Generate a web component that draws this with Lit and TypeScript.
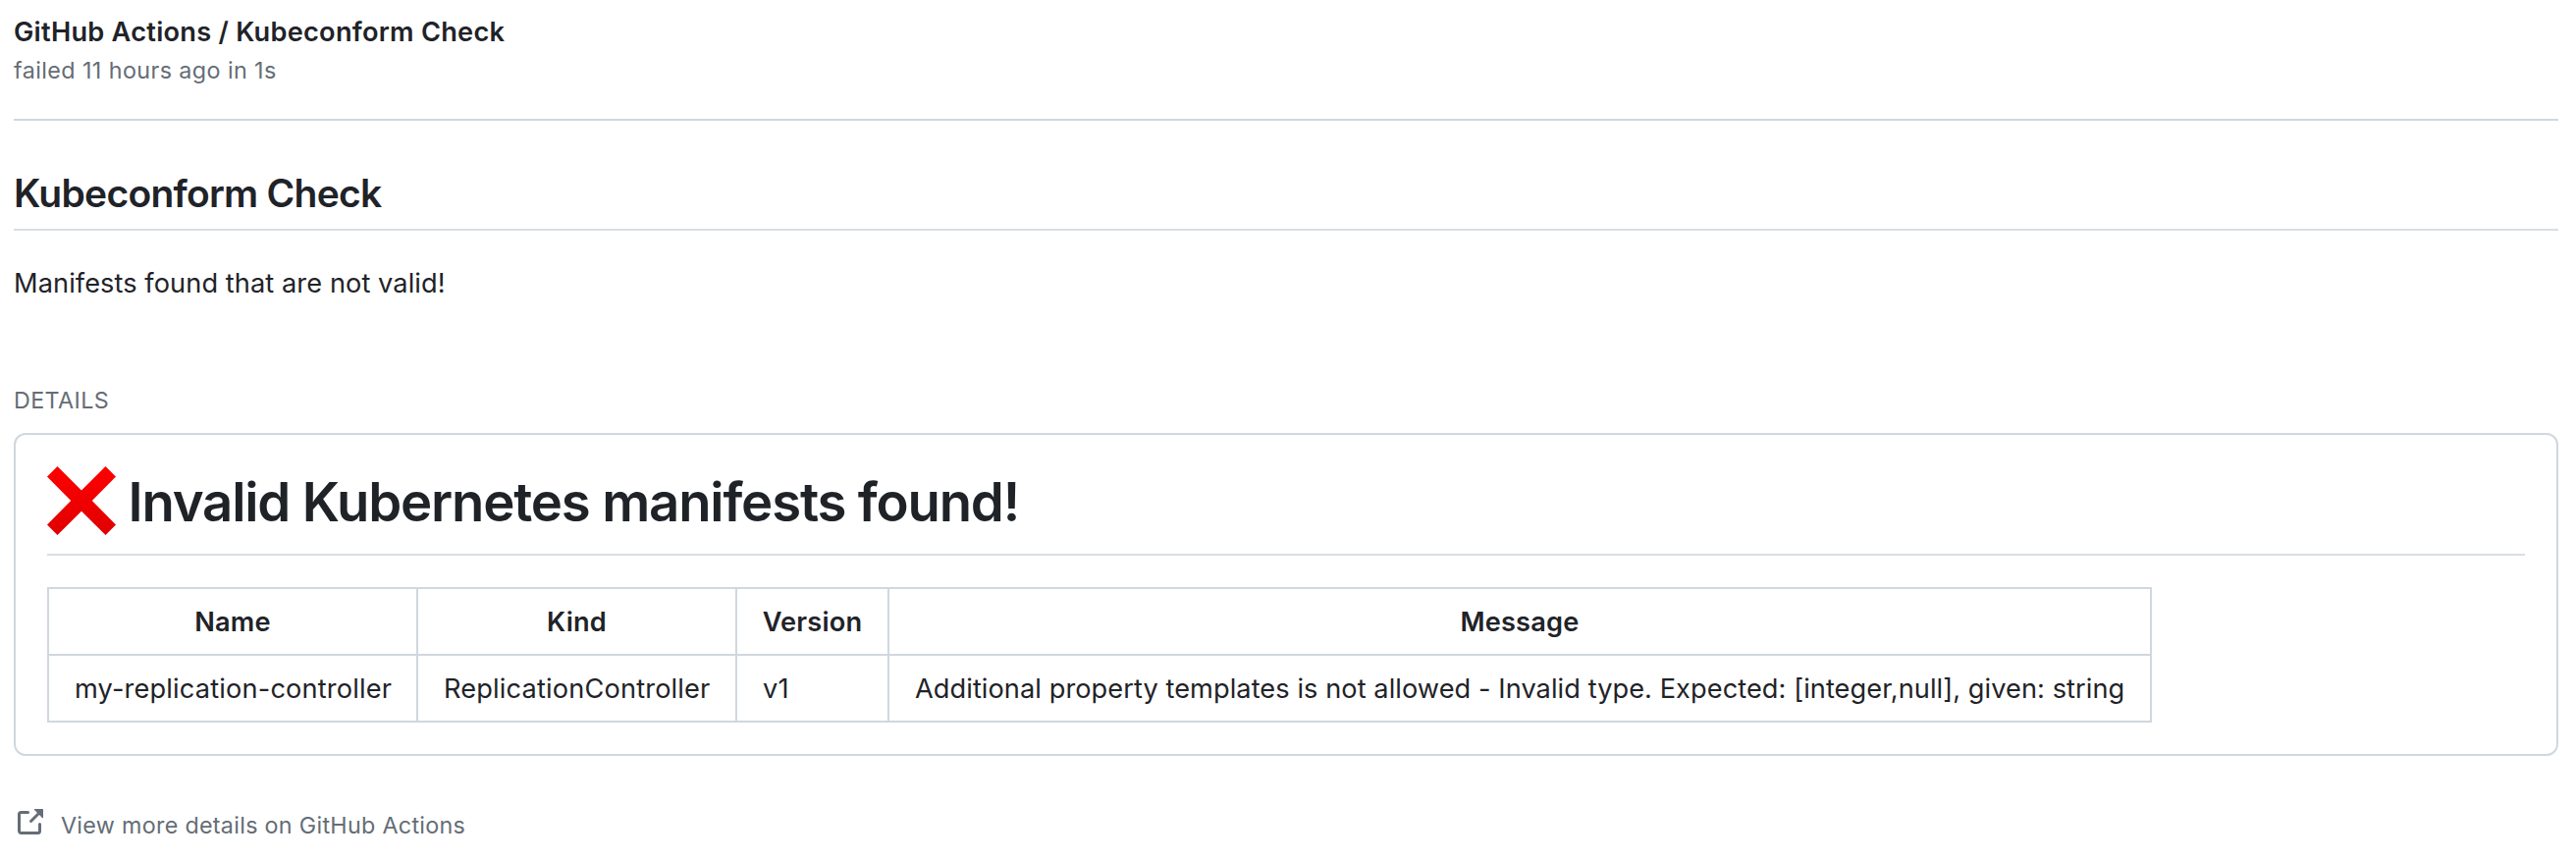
import { LitElement, html, css } from "lit";
import { customElement } from "lit/decorators.js";

interface Finding {
  name: string;
  kind: string;
  version: string;
  message: string;
}

const findings: Finding[] = [
  {
    name: "my-replication-controller",
    kind: "ReplicationController",
    version: "v1",
    message:
      "Additional property templates is not allowed - Invalid type. Expected: [integer,null], given: string",
  },
];

@customElement("findings-table")
class FindingsTable extends LitElement {
  static styles = css`
    :host {
      display: block;
    }
    .table {
      width: 2144px;
      table-layout: fixed;
      border-collapse: collapse;
      border-spacing: 0;
    }
    .col-name {
      width: 376px;
    }
    .col-kind {
      width: 325px;
    }
    .col-version {
      width: 155px;
    }
    .cell {
      box-sizing: border-box;
      padding: 13px 0 11px 26px;
      border: 2px solid #d0d7de;
      line-height: 42px;
      text-align: left;
      font-weight: 400;
      white-space: nowrap;
      letter-spacing: 0.16px;
    }
    .message {
      letter-spacing: 0.064px;
    }
    .head {
      padding: 13px 0 11px;
      text-align: center;
      font-weight: 600;
      letter-spacing: 0.2px;
    }
  `;

  render() {
    return html`
      <table class="table">
        <colgroup>
          <col class="col-name" />
          <col class="col-kind" />
          <col class="col-version" />
          <col />
        </colgroup>
        <thead>
          <tr>
            ${["Name", "Kind", "Version", "Message"].map(
              (label) => html`<th class="cell head">${label}</th>`
            )}
          </tr>
        </thead>
        <tbody>
          ${findings.map(
            (f) => html`<tr>
              <td class="cell">${f.name}</td>
              <td class="cell">${f.kind}</td>
              <td class="cell">${f.version}</td>
              <td class="cell message">${f.message}</td>
            </tr>`
          )}
        </tbody>
      </table>
    `;
  }
}

@customElement("app-root")
class AppRoot extends LitElement {
  static styles = css`
    :host {
      display: block;
      box-sizing: border-box;
      height: 876px;
      padding: 12px 18px 0 14px;
      background: #fff;
      color: #1f2328;
      font-family: Inter, "Liberation Sans", sans-serif;
      font-size: 27.2px;
      line-height: 42px;
      overflow: hidden;
    }
    .header {
      padding-bottom: 31px;
      border-bottom: 2px solid #d0d7de;
    }
    .title {
      margin: 0;
      font-size: 27.2px;
      font-weight: 600;
      letter-spacing: 0.249px;
    }
    .muted {
      color: #656d76;
      font-size: 23.3px;
      line-height: 36px;
    }
    .status {
      letter-spacing: 0.417px;
    }
    .summary-title {
      margin: 49px 0 0;
      padding-bottom: 11px;
      border-bottom: 2px solid #d8dee4;
      font-size: 39px;
      font-weight: 600;
      line-height: 50px;
      letter-spacing: -0.743px;
    }
    .summary {
      margin: 33px 0 0;
      letter-spacing: 0.08px;
    }
    .label {
      margin: 80px 0 15px;
      letter-spacing: 0.4px;
    }
    .details {
      padding: 32px;
      border: 2px solid #d0d7de;
      border-radius: 12px;
    }
    .details-title {
      display: flex;
      gap: 12.5px;
      margin: 0 0 32px;
      padding-bottom: 17px;
      border-bottom: 2px solid #d8dee4;
      font-size: 54.5px;
      font-weight: 600;
      line-height: 72px;
      letter-spacing: -1.18px;
    }
    .cross {
      flex: none;
      width: 70px;
      height: 70px;
    }
    .link {
      display: flex;
      gap: 16px;
      margin-top: 52px;
      letter-spacing: 0.3px;
      text-decoration: none;
    }
    .link-text {
      padding-top: 1px;
    }
    .link-icon {
      flex: none;
      width: 32px;
      height: 32px;
      fill: currentColor;
    }
  `;

  render() {
    return html`
      <header class="header">
        <h3 class="title">GitHub Actions / Kubeconform Check</h3>
        <div class="muted status">failed 11 hours ago in 1s</div>
      </header>
      <h2 class="summary-title">Kubeconform Check</h2>
      <p class="summary">Manifests found that are not valid!</p>
      <div class="muted label">DETAILS</div>
      <section class="details">
        <h1 class="details-title">
          <svg class="cross" viewBox="0 0 70 70" aria-hidden="true">
            <defs>
              <linearGradient id="red" x1="0" y1="0" x2="0" y2="1">
                <stop offset="0" stop-color="#ff0000" />
                <stop offset="1" stop-color="#e00000" />
              </linearGradient>
            </defs>
            <path
              fill="url(#red)"
              d="M10.5 0 35 24.5 59.5 0 70 10.5 45.8 35 70 59.5 59.5 70 35 45.7 10.5 70 0 59.5 24.2 35 0 10.5Z"
            />
          </svg>
          <span>Invalid Kubernetes manifests found!</span>
        </h1>
        <findings-table></findings-table>
      </section>
      <a class="muted link">
        <svg class="link-icon" viewBox="0 0 16 16" aria-hidden="true">
          <path
            d="M10.604 1h4.146a.25.25 0 01.25.25v4.146a.25.25 0 01-.427.177L13.03 4.03 9.28 7.78a.75.75 0 01-1.06-1.06l3.75-3.75-1.543-1.543A.25.25 0 0110.604 1zM3.75 2A1.75 1.75 0 002 3.75v8.5c0 .966.784 1.75 1.75 1.75h8.5A1.75 1.75 0 0014 12.25v-3.5a.75.75 0 00-1.5 0v3.5a.25.25 0 01-.25.25h-8.5a.25.25 0 01-.25-.25v-8.5a.25.25 0 01.25-.25h3.5a.75.75 0 000-1.5h-3.5z"
          />
        </svg>
        <span class="link-text">View more details on GitHub Actions</span>
      </a>
    `;
  }
}
